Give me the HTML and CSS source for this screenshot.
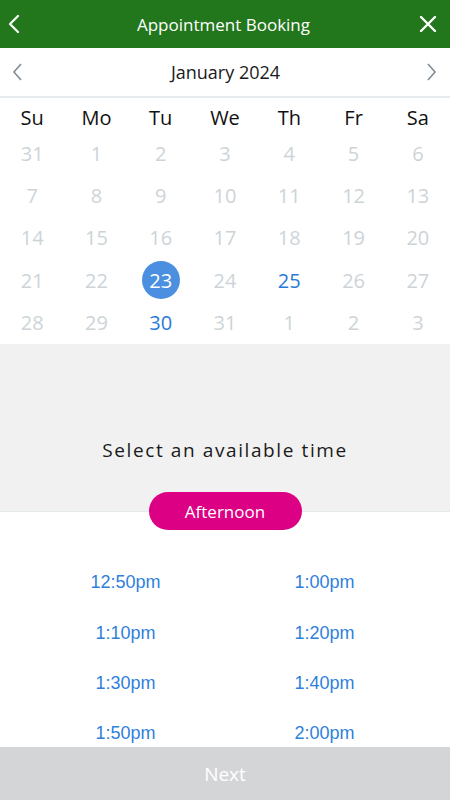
FILE: index.html
```html
<!DOCTYPE html>
<html>
<head>
<meta charset="utf-8">
<link rel="stylesheet" href="styles.css">
</head>
<body>
<div class="app">
  <header class="topbar">
    <svg class="top-icon" width="16" height="20" viewBox="0 0 16 20"><path d="M11 2 L3 10 L11 18" fill="none" stroke="#fff" stroke-width="2.2" stroke-linecap="round" stroke-linejoin="round"/></svg>
    <h1 class="title">Appointment Booking</h1>
    <svg class="top-icon" width="20" height="20" viewBox="0 0 20 20"><path d="M3 3 L17 17 M17 3 L3 17" fill="none" stroke="#fff" stroke-width="2.4" stroke-linecap="round"/></svg>
  </header>
  <div class="month">
    <svg width="14" height="20" viewBox="0 0 14 20"><path d="M10 2 L3 10 L10 18" fill="none" stroke="#7d8c96" stroke-width="1.6"/></svg>
    <span class="month-name">January 2024</span>
    <svg width="14" height="20" viewBox="0 0 14 20"><path d="M4 2 L11 10 L4 18" fill="none" stroke="#7d8c96" stroke-width="1.6"/></svg>
  </div>
  <div class="calendar">
    <div class="wd">Su</div><div class="wd">Mo</div><div class="wd">Tu</div><div class="wd">We</div><div class="wd">Th</div><div class="wd">Fr</div><div class="wd">Sa</div>
    <div class="d">31</div><div class="d">1</div><div class="d">2</div><div class="d">3</div><div class="d">4</div><div class="d">5</div><div class="d">6</div>
    <div class="d">7</div><div class="d">8</div><div class="d">9</div><div class="d">10</div><div class="d">11</div><div class="d">12</div><div class="d">13</div>
    <div class="d">14</div><div class="d">15</div><div class="d">16</div><div class="d">17</div><div class="d">18</div><div class="d">19</div><div class="d">20</div>
    <div class="d">21</div><div class="d">22</div><div class="d"><span class="sel">23</span></div><div class="d">24</div><div class="d avail">25</div><div class="d">26</div><div class="d">27</div>
    <div class="d">28</div><div class="d">29</div><div class="d avail">30</div><div class="d">31</div><div class="d">1</div><div class="d">2</div><div class="d">3</div>
  </div>
  <section class="select">
    <p class="select-title">Select an available time</p>
    <div class="pill">Afternoon</div>
  </section>
  <div class="times">
    <div class="t">12:50pm</div><div class="t">1:00pm</div>
    <div class="t">1:10pm</div><div class="t">1:20pm</div>
    <div class="t">1:30pm</div><div class="t">1:40pm</div>
    <div class="t">1:50pm</div><div class="t">2:00pm</div>
  </div>
  <footer class="next">Next</footer>
</div>
</body>
</html>
```
FILE: styles.css
```css
* { box-sizing: border-box; }
html, body { margin: 0; padding: 0; }
body {
  font-family: "Open Sans", "Noto Sans", sans-serif;
  background: #fff;
}
.app {
  width: 450px;
  height: 800px;
  display: flex;
  flex-direction: column;
  overflow: hidden;
}
.topbar {
  height: 48px;
  flex: none;
  background: #22761c;
  display: flex;
  align-items: center;
  justify-content: space-between;
  padding: 0 12px 0 7px;
}
.top-icon { display: block; }
.title {
  margin: 0 0 0 6px;
  color: #fff;
  font-size: 17px;
  font-weight: 400;
}
.month {
  height: 50px;
  flex: none;
  display: flex;
  align-items: center;
  justify-content: space-between;
  padding: 0 12px 0 11px;
  border-bottom: 2px solid #e8ecee;
}
.month svg { display: block; }
.month-name {
  font-size: 18px;
  color: #1a1a1a;
  padding-left: 2px;
}
.calendar {
  flex: none;
  display: grid;
  grid-template-columns: repeat(7, 1fr);
  grid-template-rows: 34px repeat(5, 42.3px);
  padding-bottom: 1px;
}
.wd {
  display: flex;
  align-items: center;
  justify-content: center;
  font-size: 20px;
  color: #111;
  padding-top: 4px;
}
.d {
  display: flex;
  align-items: center;
  justify-content: center;
  font-size: 20px;
  color: #cdd4d8;
}
.d.avail { color: #2a79d8; }
.sel {
  width: 38px;
  height: 38px;
  border-radius: 50%;
  background: #4a8fe0;
  color: #fff;
  display: flex;
  align-items: center;
  justify-content: center;
}
.select {
  flex: none;
  background: #f1f1f1;
  border-bottom: 1px solid #e4e9ec;
  display: flex;
  flex-direction: column;
  align-items: center;
  padding-top: 93px;
  height: 168px;
}
.select-title {
  flex: none;
  margin: 0;
  font-size: 19px;
  line-height: 26px;
  letter-spacing: 1.6px;
  color: #1a1a1a;
}
.pill {
  flex: none;
  margin-top: 29px;
  width: 153px;
  height: 38px;
  border-radius: 19px;
  background: #dc0084;
  color: #fff;
  font-size: 17px;
  display: flex;
  align-items: center;
  justify-content: center;
  position: relative;
  z-index: 1;
}
.times {
  flex: 1;
  min-height: 0;
  overflow: hidden;
  display: grid;
  grid-template-columns: 1fr 1fr;
  grid-auto-rows: 50.4px;
  align-content: start;
  padding: 45px 26px 0 26px;
  font-family: "Liberation Sans", Arial, sans-serif;
}
.t {
  display: flex;
  align-items: center;
  justify-content: center;
  font-size: 18px;
  color: #2f7fdc;
}
.next {
  flex: none;
  height: 53px;
  background: #d4d5d7;
  color: #fff;
  font-size: 19px;
  display: flex;
  align-items: center;
  justify-content: center;
}
```
